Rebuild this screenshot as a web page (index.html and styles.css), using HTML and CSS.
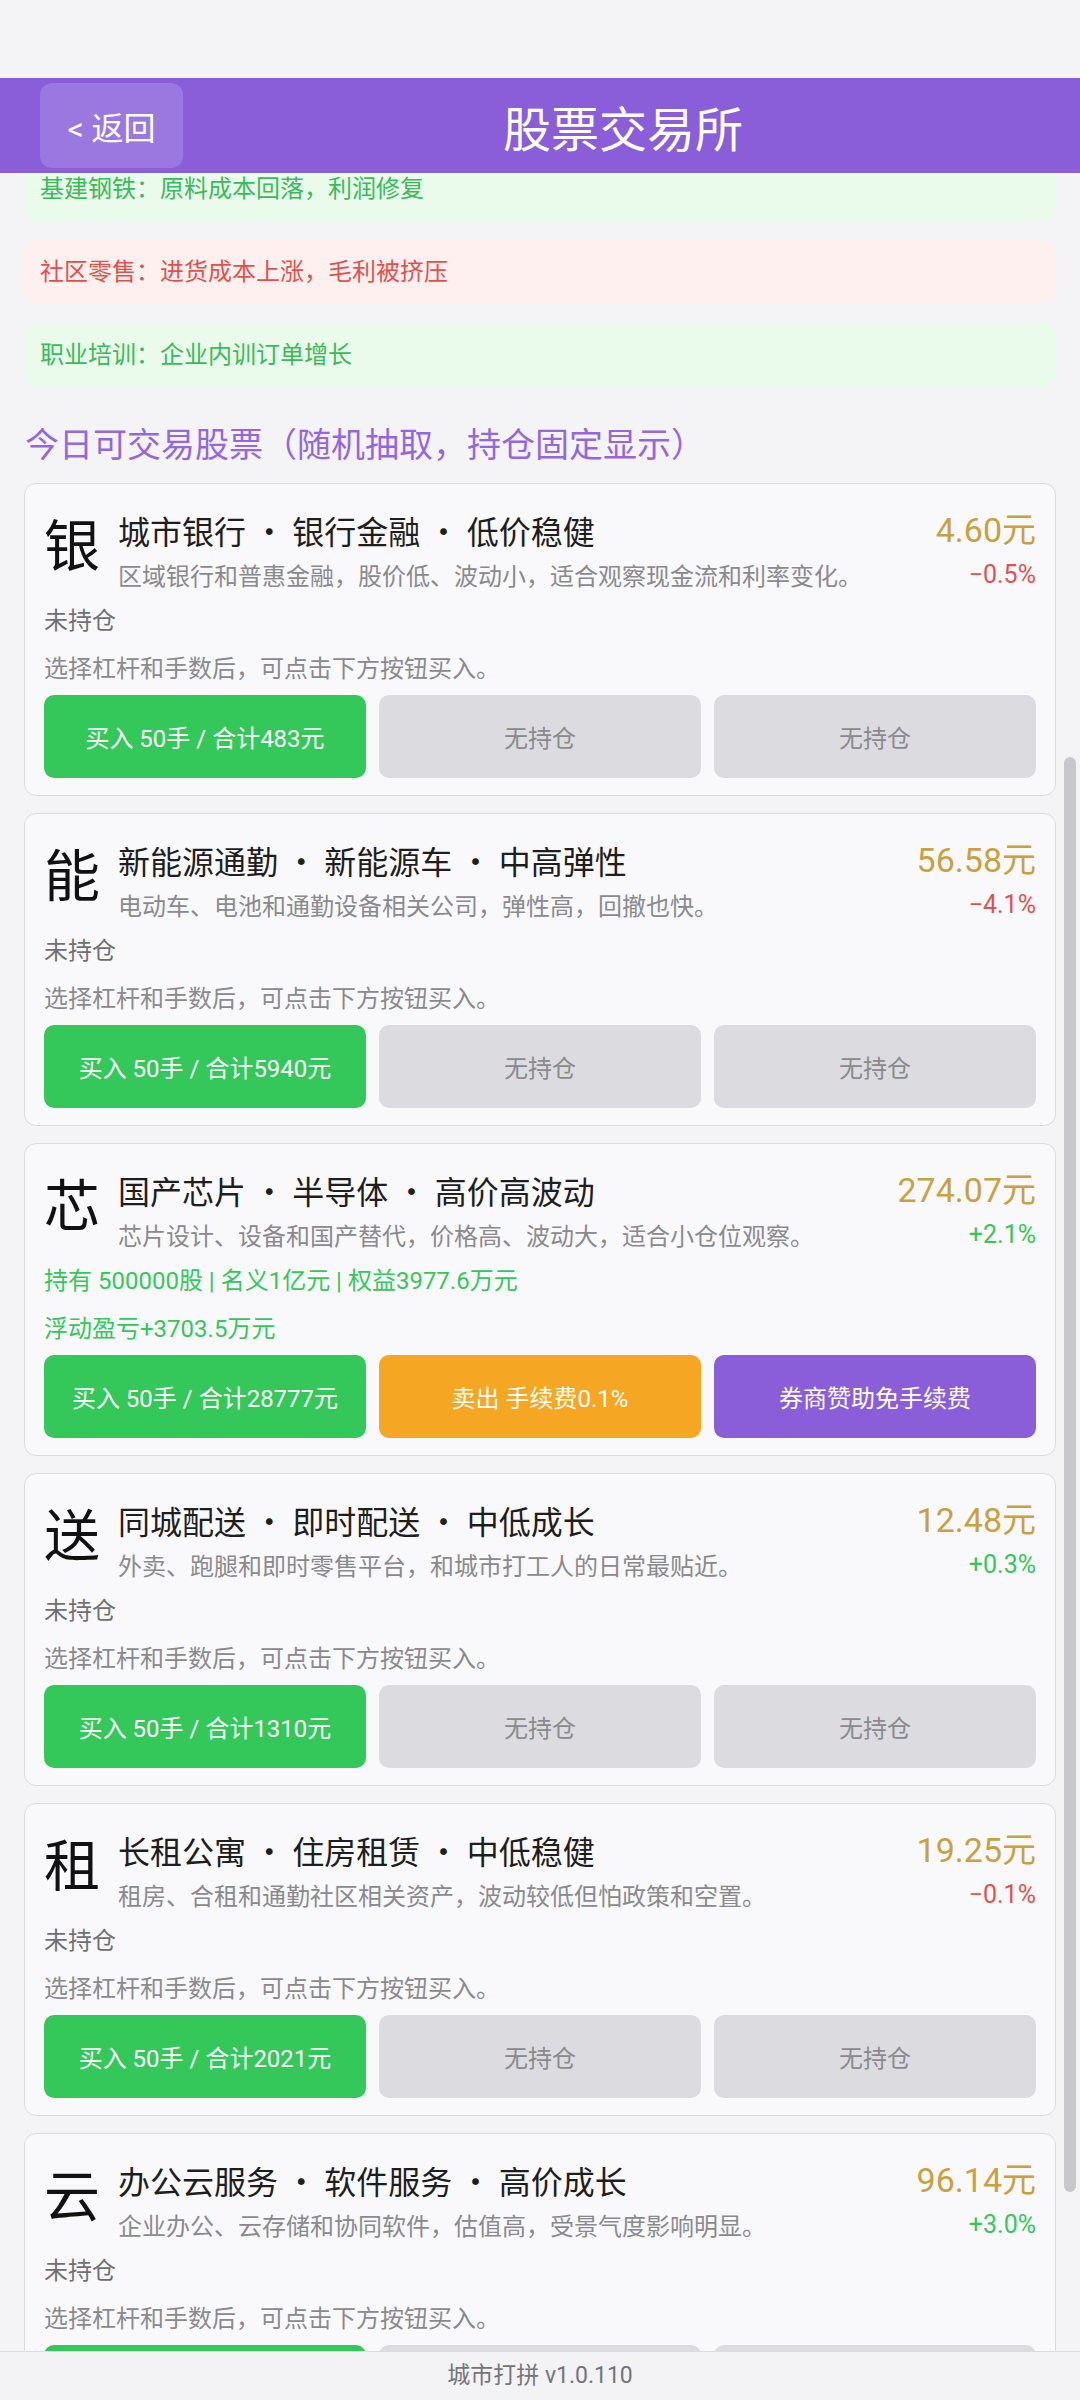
FILE: index.html
```html
<!DOCTYPE html>
<html lang="zh-CN">
<head>
    <meta charset="UTF-8">
    <meta name="viewport" content="width=device-width, initial-scale=1.0">
    <title>股票交易所</title>
    <link rel="stylesheet" href="styles.css">
</head>
<body>
    <div class="status-space"></div>

    <div class="header">
        <button class="back-btn">&lt; 返回</button>
        <h1 class="title">股票交易所</h1>
    </div>

    <div class="scroll-area">
        <div class="scroll-content">
            <div class="news news-up">基建钢铁：原料成本回落，利润修复</div>
            <div class="news news-down">社区零售：进货成本上涨，毛利被挤压</div>
            <div class="news news-up">职业培训：企业内训订单增长</div>

            <h2 class="section-title">今日可交易股票（随机抽取，持仓固定显示）</h2>

            <div class="stock-card">
                <div class="stock-head">
                    <div class="stock-icon">银</div>
                    <div class="stock-info">
                        <div class="stock-name">城市银行 · 银行金融 · 低价稳健</div>
                        <div class="stock-desc">区域银行和普惠金融，股价低、波动小，适合观察现金流和利率变化。</div>
                    </div>
                    <div class="stock-price">
                        <div class="price">4.60元</div>
                        <div class="change down">−0.5%</div>
                    </div>
                </div>
                <div class="stock-line muted">未持仓</div>
                <div class="stock-line hint">选择杠杆和手数后，可点击下方按钮买入。</div>
                <div class="actions">
                    <button class="btn btn-buy">买入 50手 / 合计483元</button>
                    <button class="btn btn-off">无持仓</button>
                    <button class="btn btn-off">无持仓</button>
                </div>
            </div>

            <div class="stock-card">
                <div class="stock-head">
                    <div class="stock-icon">能</div>
                    <div class="stock-info">
                        <div class="stock-name">新能源通勤 · 新能源车 · 中高弹性</div>
                        <div class="stock-desc">电动车、电池和通勤设备相关公司，弹性高，回撤也快。</div>
                    </div>
                    <div class="stock-price">
                        <div class="price">56.58元</div>
                        <div class="change down">−4.1%</div>
                    </div>
                </div>
                <div class="stock-line muted">未持仓</div>
                <div class="stock-line hint">选择杠杆和手数后，可点击下方按钮买入。</div>
                <div class="actions">
                    <button class="btn btn-buy">买入 50手 / 合计5940元</button>
                    <button class="btn btn-off">无持仓</button>
                    <button class="btn btn-off">无持仓</button>
                </div>
            </div>

            <div class="stock-card">
                <div class="stock-head">
                    <div class="stock-icon">芯</div>
                    <div class="stock-info">
                        <div class="stock-name">国产芯片 · 半导体 · 高价高波动</div>
                        <div class="stock-desc">芯片设计、设备和国产替代，价格高、波动大，适合小仓位观察。</div>
                    </div>
                    <div class="stock-price">
                        <div class="price">274.07元</div>
                        <div class="change up">+2.1%</div>
                    </div>
                </div>
                <div class="stock-line held">持有 500000股 | 名义1亿元 | 权益3977.6万元</div>
                <div class="stock-line held">浮动盈亏+3703.5万元</div>
                <div class="actions">
                    <button class="btn btn-buy">买入 50手 / 合计28777元</button>
                    <button class="btn btn-sell">卖出 手续费0.1%</button>
                    <button class="btn btn-free">券商赞助免手续费</button>
                </div>
            </div>

            <div class="stock-card">
                <div class="stock-head">
                    <div class="stock-icon">送</div>
                    <div class="stock-info">
                        <div class="stock-name">同城配送 · 即时配送 · 中低成长</div>
                        <div class="stock-desc">外卖、跑腿和即时零售平台，和城市打工人的日常最贴近。</div>
                    </div>
                    <div class="stock-price">
                        <div class="price">12.48元</div>
                        <div class="change up">+0.3%</div>
                    </div>
                </div>
                <div class="stock-line muted">未持仓</div>
                <div class="stock-line hint">选择杠杆和手数后，可点击下方按钮买入。</div>
                <div class="actions">
                    <button class="btn btn-buy">买入 50手 / 合计1310元</button>
                    <button class="btn btn-off">无持仓</button>
                    <button class="btn btn-off">无持仓</button>
                </div>
            </div>

            <div class="stock-card">
                <div class="stock-head">
                    <div class="stock-icon">租</div>
                    <div class="stock-info">
                        <div class="stock-name">长租公寓 · 住房租赁 · 中低稳健</div>
                        <div class="stock-desc">租房、合租和通勤社区相关资产，波动较低但怕政策和空置。</div>
                    </div>
                    <div class="stock-price">
                        <div class="price">19.25元</div>
                        <div class="change down">−0.1%</div>
                    </div>
                </div>
                <div class="stock-line muted">未持仓</div>
                <div class="stock-line hint">选择杠杆和手数后，可点击下方按钮买入。</div>
                <div class="actions">
                    <button class="btn btn-buy">买入 50手 / 合计2021元</button>
                    <button class="btn btn-off">无持仓</button>
                    <button class="btn btn-off">无持仓</button>
                </div>
            </div>

            <div class="stock-card">
                <div class="stock-head">
                    <div class="stock-icon">云</div>
                    <div class="stock-info">
                        <div class="stock-name">办公云服务 · 软件服务 · 高价成长</div>
                        <div class="stock-desc">企业办公、云存储和协同软件，估值高，受景气度影响明显。</div>
                    </div>
                    <div class="stock-price">
                        <div class="price">96.14元</div>
                        <div class="change up">+3.0%</div>
                    </div>
                </div>
                <div class="stock-line muted">未持仓</div>
                <div class="stock-line hint">选择杠杆和手数后，可点击下方按钮买入。</div>
                <div class="actions">
                    <button class="btn btn-buy">买入 50手 / 合计10095元</button>
                    <button class="btn btn-off">无持仓</button>
                    <button class="btn btn-off">无持仓</button>
                </div>
            </div>
        </div>
        <div class="scroll-thumb"></div>
    </div>

    <div class="footer">城市打拼 v1.0.110</div>
</body>
</html>
```

FILE: styles.css
```css
body {
    font-family: Roboto, "Noto Sans CJK SC", sans-serif;
    margin: 0;
    padding: 0;
    height: 2400px;
    overflow: hidden;
    background: #f4f4f6;
    color: #222;
}

.status-space {
    height: 78px;
}

.header {
    height: 95px;
    background: #8a5dd9;
    display: flex;
    align-items: center;
    padding: 0 17px 0 40px;
}

.back-btn {
    width: 143px;
    height: 85px;
    border: none;
    border-radius: 12px;
    background: #9b77e0;
    color: #fff;
    font-family: inherit;
    font-size: 32px;
    padding: 0;
}

.title {
    flex: 1;
    margin: 0;
    text-align: center;
    color: #fff;
    font-size: 48px;
    font-weight: 400;
}

.scroll-area {
    position: relative;
    height: 2178px;
    overflow: hidden;
}

.scroll-content {
    margin-top: -16px;
    padding: 0 24px;
}

.news {
    height: 64px;
    line-height: 64px;
    border-radius: 12px;
    padding-left: 16px;
    font-size: 24px;
    margin-bottom: 19px;
}

.news-up {
    background: #eafaeb;
    color: #38bb58;
}

.news-down {
    background: #fff0f0;
    color: #e2504d;
}

.section-title {
    margin: 36px 0 16px 1px;
    line-height: 44px;
    font-size: 34px;
    font-weight: 400;
    color: #9467e0;
}

.stock-card {
    background: #f9f9fb;
    border: 1px solid #dcdce0;
    border-radius: 12px;
    padding: 19px 19px 17px 19px;
    margin-bottom: 17px;
}

.stock-head {
    display: flex;
}

.stock-icon {
    width: 56px;
    margin-right: 18px;
    font-size: 56px;
    line-height: 88px;
    color: #111;
    text-align: center;
}

.stock-info {
    flex: 1;
}

.stock-name {
    font-family: "Noto Sans CJK SC", sans-serif;
    font-size: 32px;
    line-height: 54px;
    color: #1e1e1e;
}

.stock-desc {
    font-size: 24px;
    line-height: 40px;
    color: #8a8a8e;
}

.stock-price {
    text-align: right;
}

.price {
    font-size: 34px;
    line-height: 54px;
    color: #c9a13e;
}

.change {
    font-size: 25px;
    line-height: 36px;
}

.up {
    color: #34c759;
}

.down {
    color: #e0524f;
}

.stock-line {
    font-size: 24px;
    line-height: 48px;
}

.muted {
    color: #707074;
}

.hint {
    color: #8a8a8e;
}

.held {
    color: #34c759;
}

.actions {
    display: grid;
    grid-template-columns: repeat(3, 1fr);
    gap: 13px;
    margin-top: 2px;
}

.btn {
    height: 83px;
    border: none;
    border-radius: 10px;
    font-family: inherit;
    font-size: 24px;
    color: #fff;
    padding: 0;
}

.btn-buy {
    background: #34c759;
}

.btn-off {
    background: #dcdce0;
    color: #8a8a8e;
}

.btn-sell {
    background: #f5a623;
}

.btn-free {
    background: #8a5dd9;
}

.scroll-thumb {
    position: absolute;
    top: 584px;
    right: 4px;
    width: 12px;
    height: 1435px;
    border-radius: 6px;
    background: #c8c8cc;
}

.footer {
    height: 48px;
    line-height: 48px;
    border-top: 1px solid #dcdce0;
    background: #f3f3f5;
    text-align: center;
    font-size: 23px;
    color: #757579;
}
```
